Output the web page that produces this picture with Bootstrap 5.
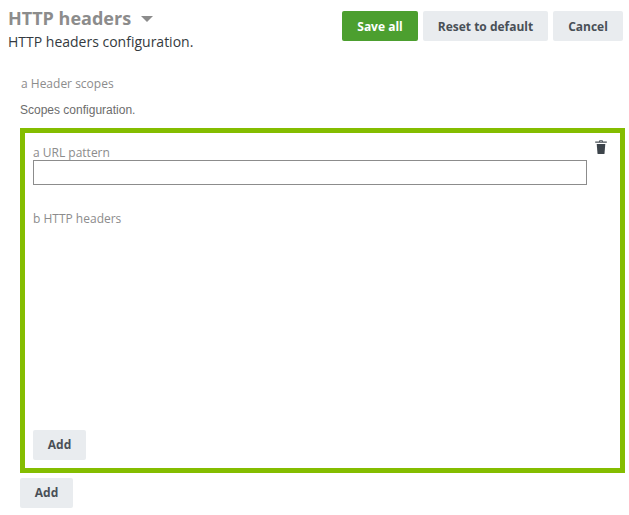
<!DOCTYPE html>
<html lang="en">
<head>
<meta charset="utf-8">
<title>HTTP headers</title>
<link href="https://cdn.jsdelivr.net/npm/bootstrap@5.3.0/dist/css/bootstrap.min.css" rel="stylesheet">
<style>
html,body{overflow:hidden}
body{font-family:"Open Sans",sans-serif;background:#fff;color:#343a40;width:629px;height:515px}
.page-head{padding:6px 6px 0 8px;height:76px}
.page-title{font-size:18px;font-weight:700;color:#8c8c8c;line-height:24px;margin:0 0 2px}
.page-desc{font-size:14px;line-height:20px;color:#343a40;margin:0}
.caret-shape{display:inline-block;width:0;height:0;border-left:6px solid transparent;border-right:6px solid transparent;border-top:6px solid #8c8c8c;margin-left:5px;vertical-align:3px}
.head-btns{padding-top:5px;column-gap:5px}
.act-btn{font-size:12px;font-weight:700;height:30px;padding:0 15px;border-radius:2px;border:0;line-height:30px;background:#e9ecef;color:#495057}
.act-btn.save-btn{background:#4c9f2f;color:#fff;width:76px;padding:1px 0 0}
.act-btn.reset-btn{width:125px;padding:1px 0 0}
.act-btn.cancel-btn{width:70px;padding:1px 0 0}
.act-btn.add-btn{width:53px;padding:0}
.main-wrap{padding:0 4px 0 20px}
.sec-label{font-size:12px;color:#8c8c8c;line-height:16px;padding-left:1px;margin:0}
.sec-desc{font-family:"Liberation Sans",sans-serif;font-size:12px;color:#6c6c6c;line-height:16px;margin:10px 0 10px}
.scope-box{border:5px solid #84bd00;height:345px;padding:12px 8px 0 8px;position:relative;display:flex;flex-direction:column;margin-bottom:5px}
.trash-ico{position:absolute;top:7px;right:13px;width:12px;height:14px;display:block}
.field-label{font-size:12px;line-height:15px;color:#8c8c8c;margin:0}
.url-field{display:block;width:554px;height:25px;border:1px solid #8c8c8c;background:#fff;padding:0 4px;border-radius:0}
.field-label.second{margin-top:26px}
</style>
</head>
<body>
<div class="page-head d-flex justify-content-between align-items-start">
  <div>
    <h1 class="page-title">HTTP headers <span class="caret-shape"></span></h1>
    <p class="page-desc">HTTP headers configuration.</p>
  </div>
  <div class="head-btns d-flex">
    <button type="button" class="btn act-btn save-btn">Save all</button>
    <button type="button" class="btn act-btn reset-btn">Reset to default</button>
    <button type="button" class="btn act-btn cancel-btn">Cancel</button>
  </div>
</div>
<div class="main-wrap">
  <p class="sec-label">a Header scopes</p>
  <p class="sec-desc">Scopes configuration.</p>
  <div class="scope-box">
    <svg class="trash-ico" viewBox="0 0 12 14" aria-hidden="true"><path fill="#495057" d="M4 1.6 L4.4 .3 H7.6 L8 1.6 H11.8 V2.8 H.2 V1.6 Z M5.1 1.6 H6.9 L6.7 1.1 H5.3 Z"/><path fill="#3d444b" d="M1.7 4 H10.3 L9.5 13.4 Q9.4 14 8.9 14 H3.1 Q2.6 14 2.5 13.4 Z"/></svg>
    <label class="field-label" for="urlp">a URL pattern</label>
    <input id="urlp" class="url-field" type="text">
    <p class="field-label second">b HTTP headers</p>
    <button type="button" class="btn act-btn add-btn mt-auto mb-2">Add</button>
  </div>
  <button type="button" class="btn act-btn add-btn">Add</button>
</div>
</body>
</html>
